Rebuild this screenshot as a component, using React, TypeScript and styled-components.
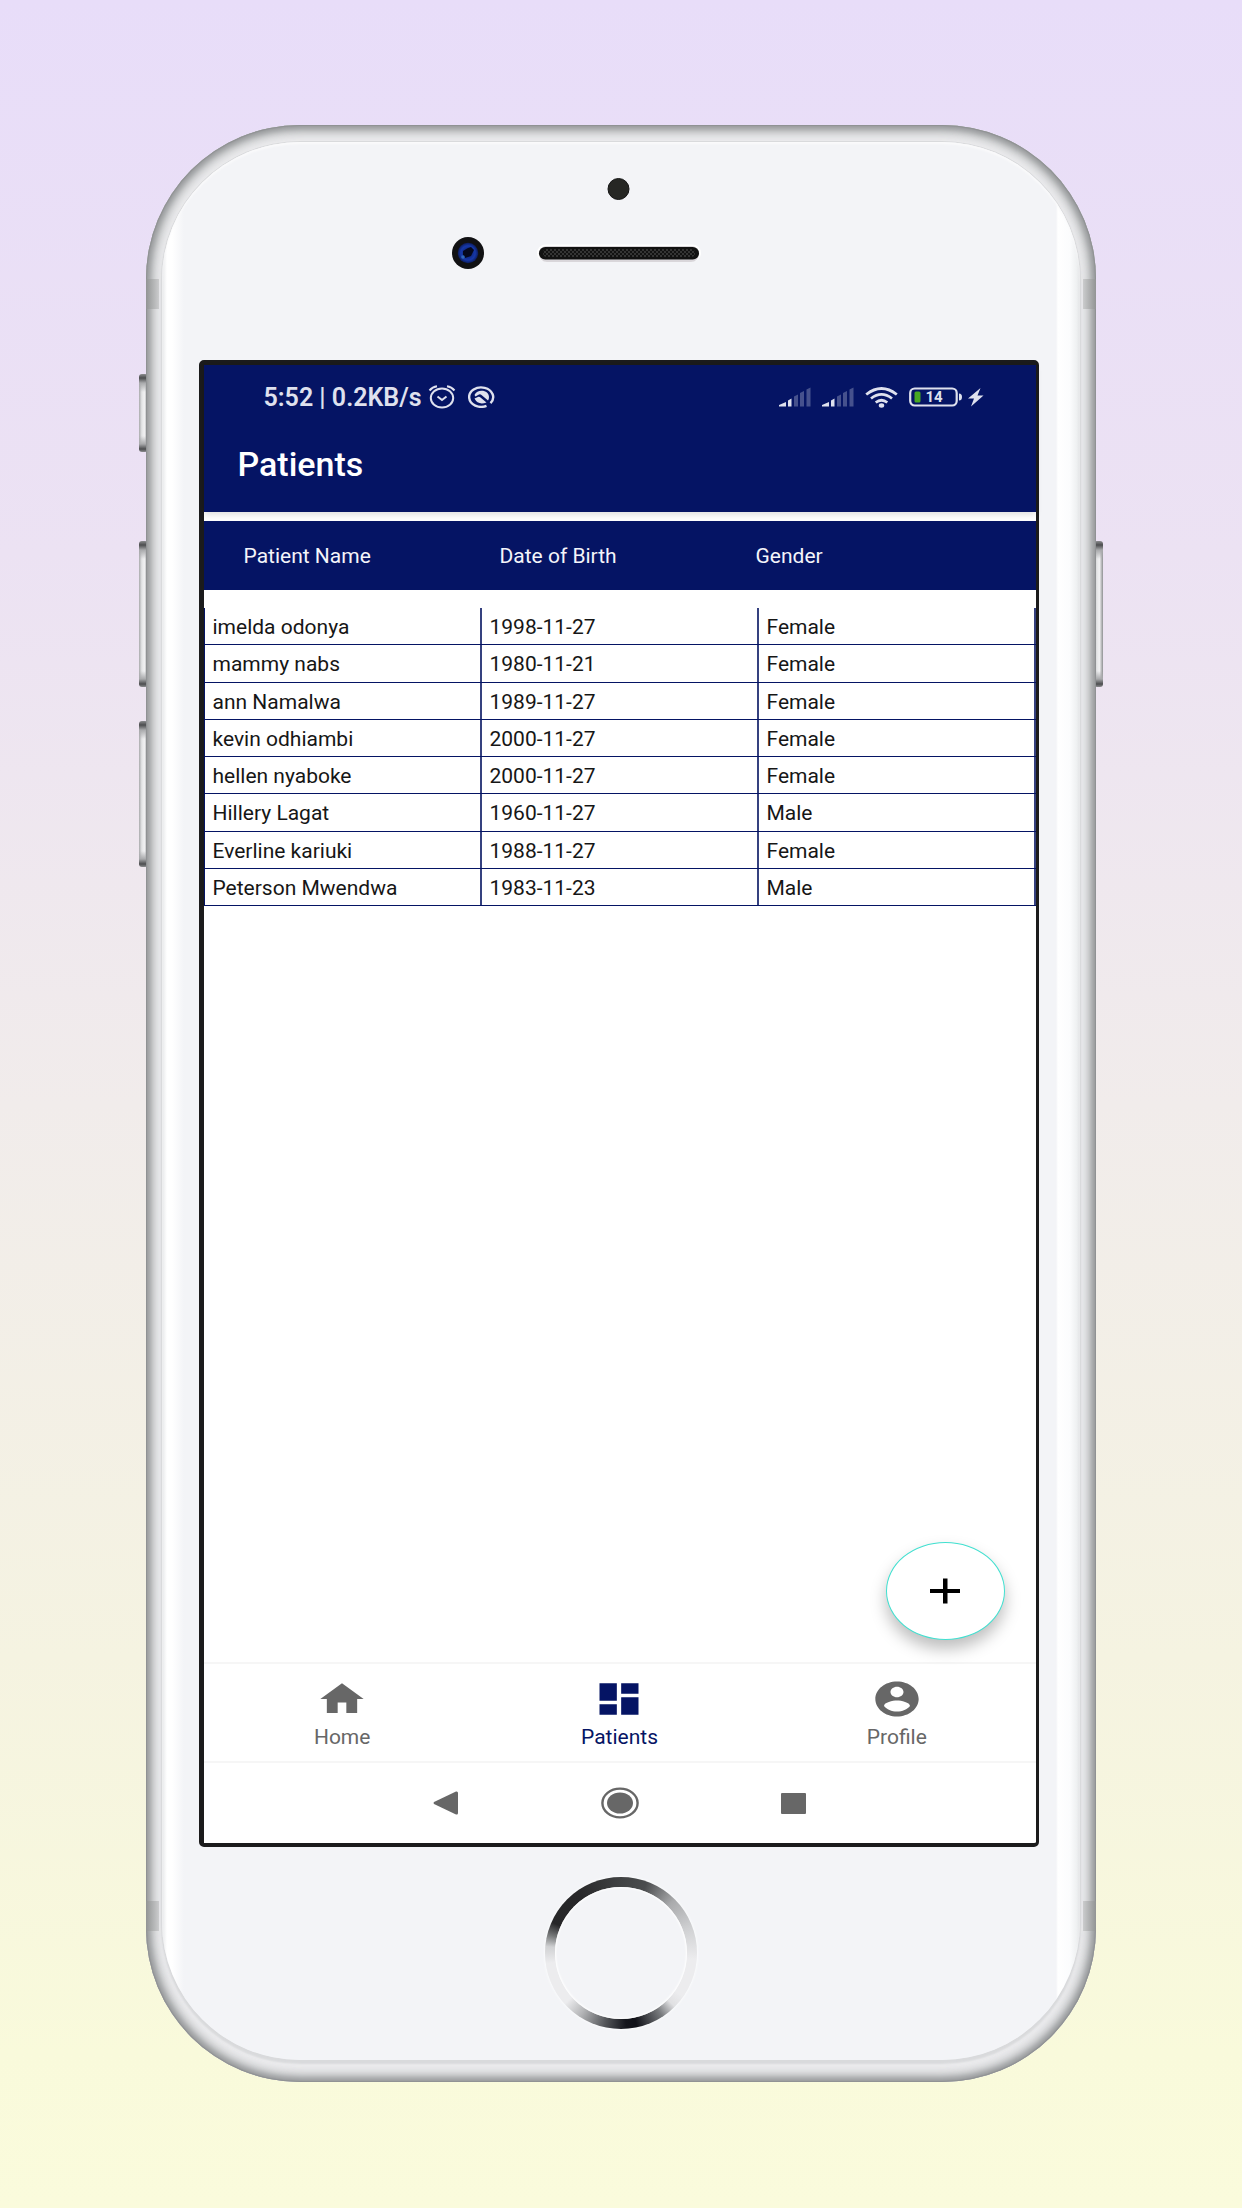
import React from "react";
import styled, { createGlobalStyle } from "styled-components";

const navy = "#051464";
const ink = "#1b1b1c";
const grey = "#676767";
const status = "#dfe1ee";

const GlobalStyle = createGlobalStyle`
  *, *::before, *::after { box-sizing: border-box; }
  body { margin: 0; font-family: Roboto, "Liberation Sans", sans-serif; }
  button { font: inherit; color: inherit; background: none; border: 0; padding: 0; cursor: pointer; }
`;

const Page = styled.div`
  min-height: 100vh;
  padding: 125px 20px;
  display: flex;
  justify-content: center;
  align-items: flex-start;
  background: linear-gradient(#e8ddf9, #ece2f3 25%, #f1eceb 50%, #f5f3e1 75%, #f9fadb 93%, #fafbdc);
`;

const Phone = styled.div`
  position: relative;
  width: 100%;
  max-width: 950px;
`;

const Shell = styled.div`
  position: relative;
  padding: 17px 16px 22px;
  border-radius: 154px;
  overflow: hidden;
  background: #ececee;
  box-shadow:
    inset 0 0 1px 1px #8f9193,
    inset 0 0 5px 4px #9a9c9e,
    inset 0 0 8px 7px #bbbdbe,
    inset 0 0 8px 10px #dcdddf;
`;

const Face = styled.div`
  display: flex;
  flex-direction: column;
  align-items: center;
  padding: 32px 0 31px;
  border-radius: 138px;
  background: linear-gradient(90deg, #e6e7e9, #fff 5px, #fff 10px, #f3f4f7 22px, #f3f4f7 calc(100% - 24px), #fff calc(100% - 22px), #fbfcfd calc(100% - 10px), #eef0f1 calc(100% - 3px), #dfe0e2);
  box-shadow: 0 0 0 1px #d9dadc, 0 3px 2px 1px #d9dadc, inset 0 2px 2px #fafafb;
`;

const SideKey = styled.span<{ $side: "left" | "right"; $top: number; $height: number }>`
  position: absolute;
  ${(p) => p.$side}: -7px;
  top: ${(p) => p.$top}px;
  width: 9px;
  height: ${(p) => p.$height}px;
  border-radius: 3px;
  background: linear-gradient(#8b8c8e, #4c4d4f 4px, #a9aaac 9px, transparent 18px, transparent calc(100% - 16px), #a9aaac calc(100% - 8px), #4c4d4f calc(100% - 3px), #8b8c8e),
    linear-gradient(90deg, #a9aaac, #e2e3e4 30%, #f2f2f3 60%, #8f9193);
`;

const Antenna = styled.span<{ $side: "left" | "right"; $edge: "top" | "bottom" }>`
  position: absolute;
  ${(p) => p.$side}: 0;
  ${(p) => p.$edge}: ${(p) => (p.$edge === "top" ? 154 : 151)}px;
  width: 13px;
  height: 30px;
  background: linear-gradient(${(p) => (p.$side === "left" ? 90 : 270)}deg, #929494, #cbcccd);
`;

const Sensors = styled.svg`
  display: block;
  width: 365px;
  height: 100px;
  margin-bottom: 86px;
`;

const Screen = styled.main`
  position: relative;
  display: flex;
  flex-direction: column;
  width: calc(100% - 78px);
  margin-right: 5px;
  aspect-ratio: 840 / 1487;
  border: solid ${ink};
  border-width: 5px 3px 4px 5px;
  border-radius: 5px;
  background: #fff;
`;

const AppBar = styled.header`
  background: ${navy};
  padding-bottom: 13px;
  box-shadow: 0 3px 6px rgba(0, 0, 0, 0.12);
`;

const StatusBar = styled.div`
  display: flex;
  align-items: center;
  height: 64px;
  padding: 0 52px 0 60px;
  color: ${status};
  font-size: 25px;
  font-weight: 600;
`;

const StatusIcons = styled.div<{ $end?: boolean }>`
  display: flex;
  align-items: center;
  gap: ${(p) => (p.$end ? 11 : 12)}px;
  margin-left: ${(p) => (p.$end ? "auto" : "6px")};
  svg { display: block; }
`;

const Title = styled.h1`
  margin: 0;
  padding-left: 34px;
  color: #fff;
  font-size: 34px;
  font-weight: 500;
  line-height: 70px;
`;

const Table = styled.table`
  display: block;
  margin-top: 9px;
  font-size: 21px;
  thead, tbody { display: block; }
  th, td { padding: 0; text-align: left; font-weight: 400; }
`;

const HeadRow = styled.tr`
  display: grid;
  grid-template-columns: repeat(3, 1fr);
  align-items: center;
  height: 69px;
  padding: 0 24px 0 40px;
  margin-bottom: 18px;
  background: ${navy};
  color: #f4f5fa;
`;

const Rows = styled.tbody`
  && {
    display: grid;
    grid-auto-rows: 1fr;
    height: 298px;
  }
`;

const Row = styled.tr`
  display: grid;
  grid-template-columns: repeat(3, 1fr);
  border: solid ${navy};
  border-width: 0 0 1px 1px;
  color: #161616;
`;

const Cell = styled.td`
  border-right: 2px solid #35417f;
  line-height: 34px;
  &&& { padding: 2px 0 0 8px; }
`;

const Fab = styled.button`
  && {
    position: absolute;
    right: 31px;
    bottom: 203px;
    display: grid;
    place-items: center;
    width: 119px;
    height: 98px;
    border: 1px solid #40e0d0;
    border-radius: 50%;
    background: #fff;
    box-shadow: 0 9px 16px rgba(0, 0, 0, 0.26);
  }
`;

const Tabs = styled.nav`
  display: grid;
  grid-template-columns: repeat(3, 1fr);
  height: 101px;
  margin-top: auto;
  border: solid #f6f6f6;
  border-width: 2px 0;
`;

const Tab = styled.a<{ $active?: boolean }>`
  display: flex;
  flex-direction: column;
  align-items: center;
  padding-top: 14px;
  color: ${(p) => (p.$active ? navy : grey)};
  font-size: 21px;
  line-height: 28px;
  text-decoration: none;
  svg { display: block; margin-bottom: 3px; }
`;

const SystemBar = styled.div`
  display: grid;
  grid-template-columns: repeat(3, 174px);
  justify-content: center;
  height: 80px;
  color: ${grey};
  button { display: grid; place-items: center; }
`;

const HomeKey = styled.button`
  && {
    width: 152px;
    height: 152px;
    margin-top: 30px;
    padding: 10px;
    border-radius: 50%;
    background: conic-gradient(#404243, #4a4c4e 20deg, #a9aaac 45deg, #cfd0d2 70deg, #ececee 95deg, #ececee 125deg, #e0e0e2 135deg, #77797c 147deg, #101118 168deg, #14151c 176deg, #505256 192deg, #b4b5b7 213deg, #ececee 228deg, #ececee 262deg, #d0d1d3 275deg, #77797a 284deg, #262628 294deg, #28282a 325deg, #404243);
    box-shadow: 0 0 2px 1px #fafbfc;
  }
  &::before {
    content: "";
    display: block;
    height: 100%;
    border-radius: 50%;
    background: #f3f4f7;
    box-shadow: inset 0 0 2px 1px #fff;
  }
`;

const patients = [
  ["imelda odonya", "1998-11-27", "Female"],
  ["mammy nabs", "1980-11-21", "Female"],
  ["ann Namalwa", "1989-11-27", "Female"],
  ["kevin odhiambi", "2000-11-27", "Female"],
  ["hellen nyaboke", "2000-11-27", "Female"],
  ["Hillery Lagat", "1960-11-27", "Male"],
  ["Everline kariuki", "1988-11-27", "Female"],
  ["Peterson Mwendwa", "1983-11-23", "Male"],
];

const Alarm = () => (
  <svg width="28" height="24" viewBox="0 0 28 24" fill="none" stroke={status} strokeWidth="2">
    <ellipse cx="14" cy="13" rx="11.2" ry="9.6" />
    <path d="M1.5 5.5Q4.500 2 9 1.300M26.500 5.500Q23.500 2 19 1.300" />
    <path d="M9.500 11.500l4.500 3.500 4.500-3.500" />
  </svg>
);

const Capture = () => (
  <svg width="27" height="22" viewBox="0 0 27 22" fill="none" stroke={status} strokeWidth="2.400">
    <path d="M18.500 19.800A12 9.700 0 1 1 22.500 17.200" />
    <path d="M6.500 9C8 6 10.500 4.800 13.500 4.800C18 4.800 21 7.500 21 11Q21 13 20 14.500L13.500 9Q12 7.800 10.500 8.800L7.500 10.500Z" fill={status} stroke="none" />
    <path d="M6.500 12.500L10.500 10.800Q11.500 10.500 12.500 11.500L18.500 16.500Q10 19.500 6.500 12.500Z" fill={status} stroke="none" />
  </svg>
);

const Signal = () => (
  <svg width="32" height="20" viewBox="0 0 32 20" fill={status}>
    <path d="M0 19.500V18l7-3v4.500zM9 19.500V13.500l3.500-2v8z" />
    <path opacity=".3" d="M15 19.500V9.500l4-2v12zM21 19.500V6l4-2v15.500zM27.500 19.500V2.500L31.500.5v19z" />
  </svg>
);

const Wifi = () => (
  <svg width="33" height="21" viewBox="0 0 33 21" fill="none" stroke={status} strokeWidth="2.800">
    <path d="M1.200 7.500Q16.500-4.500 31.800 7.500M6 11.500Q16.500 3.300 27 11.500M10.700 15.500Q16.500 11 22.300 15.500" />
    <ellipse cx="16.500" cy="18.500" rx="2.700" ry="2.200" fill={status} stroke="none" />
  </svg>
);

const ChargingBattery = () => (
  <svg width="75" height="20" viewBox="0 0 75 20">
    <rect x="1.200" y="1.500" width="46.500" height="17" rx="4.500" fill="none" stroke={status} strokeWidth="2.200" />
    <rect x="5.500" y="4.500" width="6" height="11" rx="1.500" fill="#48a823" />
    <path d="M50 6.500q3 0 3 3.500t-3 3.500z" fill={status} />
    <text x="25" y="15" textAnchor="middle" fontSize="15" fontWeight="700" fontFamily="Roboto, sans-serif" fill={status}>14</text>
    <path d="M71.500 1L59 11.500h6L62 19.500 74.500 8.500H68.500z" fill={status} />
  </svg>
);

export default function App() {
  return (
    <>
      <GlobalStyle />
      <Page>
        <Phone>
          <SideKey $side="left" $top={249} $height={78} />
          <SideKey $side="left" $top={416} $height={146} />
          <SideKey $side="left" $top={596} $height={146} />
          <SideKey $side="right" $top={416} $height={146} />
          <Shell>
            <Antenna $side="left" $edge="top" />
            <Antenna $side="right" $edge="top" />
            <Antenna $side="left" $edge="bottom" />
            <Antenna $side="right" $edge="bottom" />
            <Face>
              <Sensors viewBox="0 0 365 100" aria-hidden="true">
                <defs>
                  <pattern id="mesh" width="4" height="4" patternUnits="userSpaceOnUse">
                    <path d="M0 0l4 4M4 0L0 4" stroke="#3c3c3c" strokeWidth=".8" />
                  </pattern>
                  <radialGradient id="lens">
                    <stop offset="0" stopColor="#0a1a5c" />
                    <stop offset=".7" stopColor="#1638a8" />
                    <stop offset="1" stopColor="#0c1c5e" />
                  </radialGradient>
                </defs>
                <circle cx="179.500" cy="15" r="10.500" fill="#262724" stroke="#151515" />
                <circle cx="29" cy="79" r="16" fill="#111113" />
                <circle cx="29" cy="79" r="10.200" fill="url(#lens)" />
                <path d="M24 77l5-3 3-1 3 3-3 6-6 2-2-3z" fill="#05081c" />
                <circle cx="24" cy="83" r="1.800" fill="#2f66b8" />
                <rect x="98" y="70.500" width="164" height="17" rx="8.500" fill="#fff" />
                <rect x="100" y="72" width="160" height="16" rx="8" fill="#d9d6da" />
                <rect x="100" y="73" width="160" height="12.500" rx="6.250" fill="#121212" />
                <rect x="104" y="75" width="152" height="8" rx="4" fill="url(#mesh)" />
              </Sensors>
              <Screen>
                <AppBar>
                  <StatusBar>
                    <span>5:52 | 0.2KB/s</span>
                    <StatusIcons><Alarm /><Capture /></StatusIcons>
                    <StatusIcons $end><Signal /><Signal /><Wifi /><ChargingBattery /></StatusIcons>
                  </StatusBar>
                  <Title>Patients</Title>
                </AppBar>
                <Table>
                  <thead>
                    <HeadRow>
                      <th scope="col">Patient Name</th>
                      <th scope="col">Date of Birth</th>
                      <th scope="col">Gender</th>
                    </HeadRow>
                  </thead>
                  <Rows>
                    {patients.map(([name, born, gender]) => (
                      <Row key={name}>
                        <Cell>{name}</Cell>
                        <Cell>{born}</Cell>
                        <Cell>{gender}</Cell>
                      </Row>
                    ))}
                  </Rows>
                </Table>
                <Fab type="button" aria-label="Add patient">
                  <svg width="30" height="26" viewBox="0 0 30 26">
                    <path d="M13 0.500h4.500v10.500H30v4H17.500v10.500H13V15H0v-4h13z" fill="#000" />
                  </svg>
                </Fab>
                <Tabs>
                  <Tab href="#home">
                    <svg width="52" height="42" viewBox="0 0 24 24" preserveAspectRatio="none" fill="currentColor">
                      <path d="M10 20v-6h4v6h5v-8h3L12 3 2 12h3v8z" />
                    </svg>
                    Home
                  </Tab>
                  <Tab href="#patients" $active aria-current="page">
                    <svg width="52" height="42" viewBox="0 0 24 24" preserveAspectRatio="none" fill="currentColor">
                      <path d="M3 13h8V3H3v10zm0 8h8v-6H3v6zm10 0h8V11h-8v10zm0-18v6h8V3h-8z" />
                    </svg>
                    Patients
                  </Tab>
                  <Tab href="#profile">
                    <svg width="52" height="42" viewBox="0 0 24 24" preserveAspectRatio="none" fill="currentColor">
                      <path d="M12 2C6.480 2 2 6.480 2 12s4.480 10 10 10 10-4.480 10-10S17.520 2 12 2zm0 3c1.660 0 3 1.340 3 3s-1.340 3-3 3-3-1.340-3-3 1.340-3 3-3zm0 14.200c-2.500 0-4.710-1.280-6-3.220.03-1.990 4-3.080 6-3.080 1.990 0 5.970 1.090 6 3.080-1.290 1.940-3.500 3.220-6 3.220z" />
                    </svg>
                    Profile
                  </Tab>
                </Tabs>
                <SystemBar>
                  <button type="button" aria-label="Back">
                    <svg width="26" height="24" viewBox="0 0 26 24"><path d="M1 11q-1 1 0 2l22 10.500q2 .5 2-1.500V2q0-2-2-1.500z" fill="currentColor" /></svg>
                  </button>
                  <button type="button" aria-label="Home screen">
                    <svg width="38" height="32" viewBox="0 0 38 32">
                      <ellipse cx="19" cy="16" rx="17.600" ry="14.400" fill="none" stroke="currentColor" strokeWidth="2.400" />
                      <ellipse cx="19" cy="16" rx="13" ry="10.600" fill="currentColor" />
                    </svg>
                  </button>
                  <button type="button" aria-label="Recent apps">
                    <svg width="25" height="21" viewBox="0 0 25 21"><rect width="25" height="21" rx="1" fill="currentColor" /></svg>
                  </button>
                </SystemBar>
              </Screen>
              <HomeKey type="button" aria-label="Home button" />
            </Face>
          </Shell>
        </Phone>
      </Page>
    </>
  );
}
